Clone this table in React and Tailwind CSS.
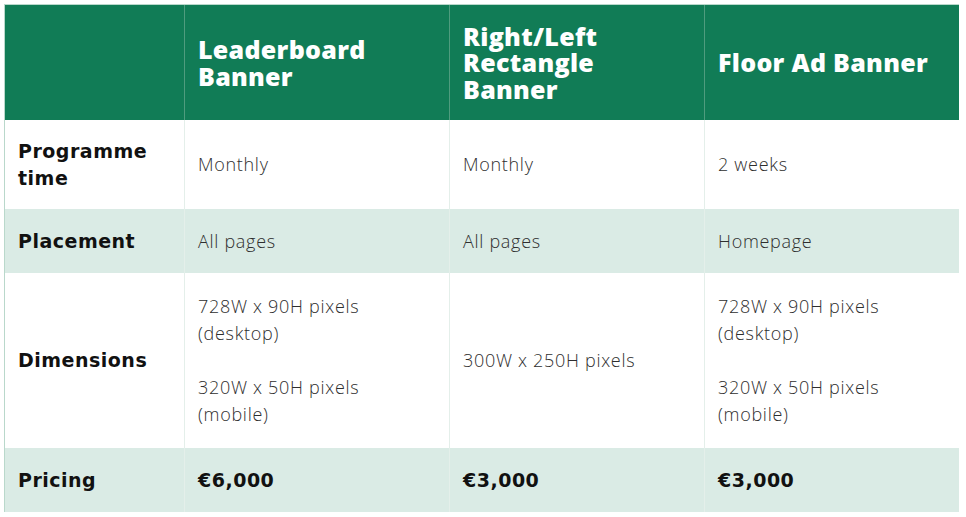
import React from "react";

const bodyFont = { fontFamily: "'Open Sans', 'Noto Sans', sans-serif" };
const boldFont = { fontFamily: "'DejaVu Sans', 'Open Sans', sans-serif" };

function HeadCell({ children, last }) {
  return (
    <div
      className={
        "flex items-center bg-[#117c56] px-[13px] text-[25px] font-extrabold leading-[26.5px] text-white tracking-[0.3px] " +
        (last ? "" : "border-r border-[#4f9c7e]")
      }
    >
      <div>{children}</div>
    </div>
  );
}

function Cell({ children, bg, last }) {
  return (
    <div
      className={
        "flex items-center px-[13px] text-[18px] leading-[27px] font-light tracking-[0.7px] text-[#2e2e2e] " +
        (bg ? "bg-[#daebe5] " : "bg-white ") +
        (last ? "" : "border-r border-[#e4efea] ")
      }
    >
      {children}
    </div>
  );
}

function Bold({ children }) {
  return (
    <div className="text-[19px] font-bold leading-[27px] tracking-[0.5px] text-[#111]" style={boldFont}>
      {children}
    </div>
  );
}

function Dims() {
  return (
    <div className="flex flex-col gap-[27px]">
      <div>
        728W x 90H pixels
        <br />
        (desktop)
      </div>
      <div>
        320W x 50H pixels
        <br />
        (mobile)
      </div>
    </div>
  );
}

export default function App() {
  const rows = [
    {
      label: (
        <>
          Programme
          <br />
          time
        </>
      ),
      cells: ["Monthly", "Monthly", "2 weeks"],
      bg: false,
    },
    { label: "Placement", cells: ["All pages", "All pages", "Homepage"], bg: true },
    {
      label: "Dimensions",
      cells: [<Dims />, "300W x 250H pixels", <Dims />],
      bg: false,
    },
    { label: "Pricing", cells: ["€6,000", "€3,000", "€3,000"], bg: true, price: true },
  ];

  return (
    <div className="min-h-[517px] w-[966px] bg-white pl-[4px] pt-[4px]" style={bodyFont}>
      <div className="grid w-[955px] grid-cols-[180px_265px_255px_254px] grid-rows-[115px_89px_64px_175px_64px] border-l border-t border-[#b9d8cb]">
        <HeadCell />
        <HeadCell>
          Leaderboard
          <br />
          Banner
        </HeadCell>
        <HeadCell>
          Right/Left
          <br />
          Rectangle
          <br />
          Banner
        </HeadCell>
        <HeadCell last>Floor Ad Banner</HeadCell>
        {rows.map((r, i) => (
          <React.Fragment key={i}>
            <Cell bg={r.bg}>
              <Bold>{r.label}</Bold>
            </Cell>
            {r.cells.map((c, j) => (
              <Cell key={j} bg={r.bg} last={j === 2}>
                {r.price ? <Bold>{c}</Bold> : c}
              </Cell>
            ))}
          </React.Fragment>
        ))}
      </div>
    </div>
  );
}
